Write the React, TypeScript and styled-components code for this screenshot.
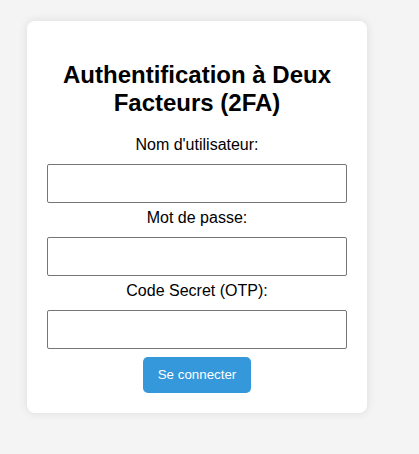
import React from "react";
import styled, { createGlobalStyle } from "styled-components";

const GlobalStyle = createGlobalStyle`
  html, body {
    margin: 0;
    padding: 0;
    background: #f4f4f4;
    font-family: "Liberation Sans", Arial, sans-serif;
  }
`;

const Page = styled.div`
  min-height: 454px;
  box-sizing: border-box;
  padding: 21px 0 0 27px;
  background: #f4f4f4;
`;

const Card = styled.div`
  width: 340px;
  box-sizing: border-box;
  padding: 20px;
  background: #ffffff;
  border-radius: 8px;
  box-shadow: 0 0 10px rgba(0, 0, 0, 0.1);
  text-align: center;
`;

const Title = styled.h2`
  margin: 20px 0;
  font-size: 24px;
  line-height: 27.6px;
  font-weight: bold;
  color: #000;
`;

const Form = styled.form`
  display: flex;
  flex-direction: column;
  align-items: center;
`;

const Label = styled.label`
  display: block;
  font-size: 16px;
  line-height: 18px;
  color: #000;
`;

const Input = styled.input`
  display: block;
  width: 300px;
  height: 39px;
  box-sizing: border-box;
  margin: 10px 0 6px;
  padding: 10px;
  border: 1px solid #767676;
  border-radius: 2px;
  background: #fff;
  font-family: "Liberation Sans", Arial, sans-serif;
  font-size: 13.333px;
`;

const Button = styled.button`
  margin-top: 2px;
  padding: 10px 15px;
  border: none;
  border-radius: 5px;
  background: #3498db;
  color: #fff;
  font-family: "Liberation Sans", Arial, sans-serif;
  font-size: 13.333px;
  line-height: 15.33px;
  cursor: pointer;
`;

const fields = [
  { id: "username", label: "Nom d'utilisateur:", type: "text" },
  { id: "password", label: "Mot de passe:", type: "password" },
  { id: "otp", label: "Code Secret (OTP):", type: "text" },
];

export default function App() {
  return (
    <>
      <GlobalStyle />
      <Page>
        <Card>
          <Title>Authentification à Deux Facteurs (2FA)</Title>
          <Form onSubmit={(e) => e.preventDefault()}>
            {fields.map((f) => (
              <React.Fragment key={f.id}>
                <Label htmlFor={f.id}>{f.label}</Label>
                <Input id={f.id} type={f.type} />
              </React.Fragment>
            ))}
            <Button type="submit">Se connecter</Button>
          </Form>
        </Card>
      </Page>
    </>
  );
}
